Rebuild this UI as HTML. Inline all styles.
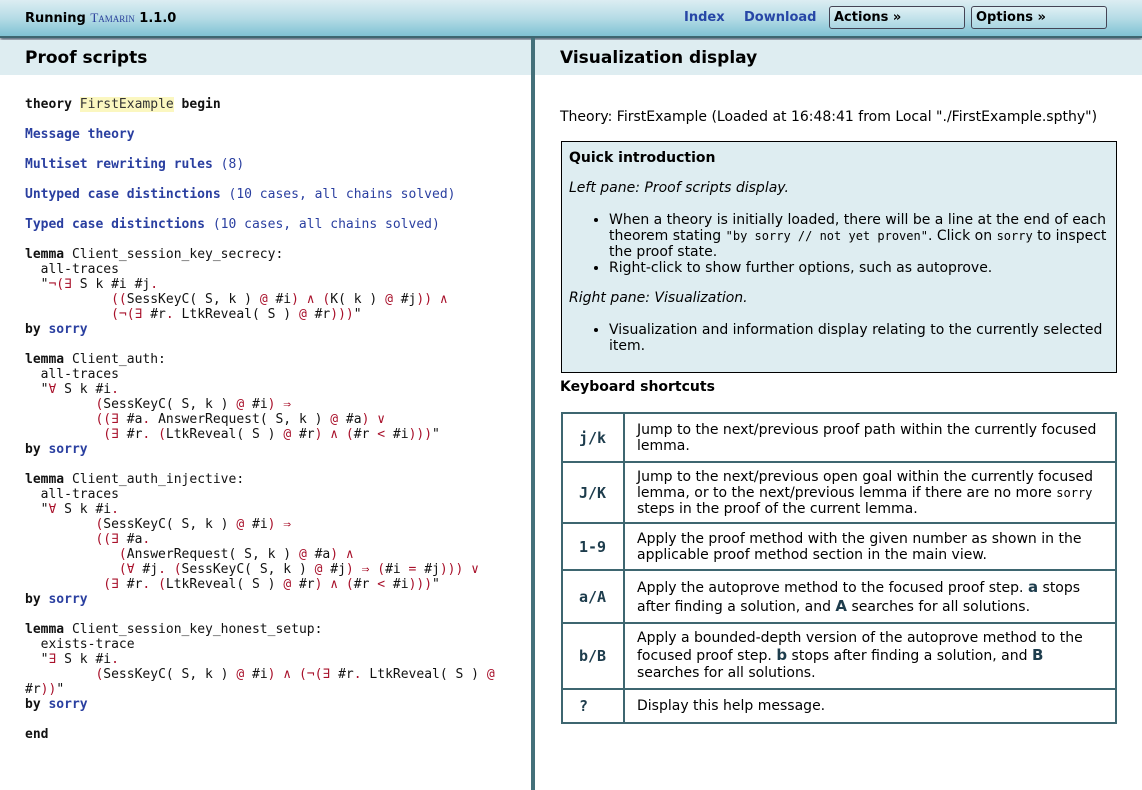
<!DOCTYPE html>
<html><head><meta charset="utf-8">
<style>
*{margin:0;padding:0;box-sizing:border-box}
body{width:1142px;height:790px;overflow:hidden;background:#fff;font-family:"DejaVu Sans","Liberation Sans",sans-serif;color:#000;position:relative}
#top{position:absolute;left:0;top:0;width:1142px;height:38px;background:linear-gradient(#dcedf2,#b6dce6 50%,#7fc2d3);border-bottom:2px solid #3e6670;box-shadow:0 2px 3px #567}
#top .t{position:absolute;left:25px;top:10px;font-size:13px;font-weight:bold}
#top .tam{font-family:"Liberation Serif",serif;font-variant:small-caps;color:#2a3f9a;font-weight:normal;font-size:13px}
#top a{position:absolute;top:10px;font-size:13px;font-weight:bold;color:#2746a6;text-decoration:none}
.btn{position:absolute;top:6px;height:23px;width:136px;border:1px solid #445;border-radius:3px;background:linear-gradient(#dff0f4,#a9d6e2);font-size:13px;font-weight:bold;padding:3px 4px}
.hd{position:absolute;top:40px;height:35px;background:#deedf1;font-size:17px;font-weight:bold;padding:8px 0 0 25px}
#div{position:absolute;left:531px;top:38px;width:4px;height:752px;background:#44707a}
pre{position:absolute;left:25px;top:97px;font-family:"DejaVu Sans Mono","Liberation Mono",monospace;font-size:13px;line-height:15px;color:#111}
pre b{font-weight:bold}
.l{color:#2a3fa0;font-weight:bold}
.n{color:#2a3fa0}
.r{color:#a8102a}
.hl{background:#fbf7c0;color:#333}
.th{position:absolute;left:560px;top:109px;font-size:14px;white-space:nowrap}
.box{position:absolute;left:561px;top:141px;width:556px;height:232px;background:#deedf1;border:1px solid #000;padding:8px 7px;font-size:14px;line-height:16px}
.box ul{margin:16px 0 14px 40px}
.box code,td code{font-family:"DejaVu Sans Mono",monospace;font-size:12px}
.ks{position:absolute;left:560px;top:379px;font-size:14px;font-weight:bold}
table{position:absolute;left:561px;top:412px;width:556px;border-collapse:collapse;border:2px solid #3e6670;font-size:14px;line-height:16px}
td{border:2px solid #3e6670;padding:0 10px 0 12px;vertical-align:middle}
td.k{width:62px;font-family:"DejaVu Sans Mono",monospace;font-weight:bold;font-size:15px;color:#1d3c4c;padding-left:16px}
td b{color:#1d3c4c;font-size:15px}
</style></head><body>
<div id="top">
<div class="t">Running <span class="tam">Tamarin</span> 1.1.0</div>
<a style="left:684px">Index</a><a style="left:744px">Download</a>
<div class="btn" style="left:829px">Actions »</div>
<div class="btn" style="left:971px">Options »</div>
</div>
<div class="hd" style="left:0;width:531px">Proof scripts</div>
<div class="hd" style="left:535px;width:607px">Visualization display</div>
<div id="div"></div>
<pre><b>theory</b> <span class="hl">FirstExample</span> <b>begin</b>

<span class="l">Message theory</span>

<span class="l">Multiset rewriting rules</span> <span class="n">(8)</span>

<span class="l">Untyped case distinctions</span> <span class="n">(10 cases, all chains solved)</span>

<span class="l">Typed case distinctions</span> <span class="n">(10 cases, all chains solved)</span>

<b>lemma</b> Client_session_key_secrecy:
  all-traces
  "<span class="r">¬(∃</span> S k #i #j<span class="r">.</span>
           <span class="r">((</span>SessKeyC( S, k ) <span class="r">@</span> #i<span class="r">) ∧ (</span>K( k ) <span class="r">@</span> #j<span class="r">)) ∧</span>
           <span class="r">(¬(∃</span> #r<span class="r">.</span> LtkReveal( S ) <span class="r">@</span> #r<span class="r">)))</span>"
<b>by</b> <span class="l">sorry</span>

<b>lemma</b> Client_auth:
  all-traces
  "<span class="r">∀</span> S k #i<span class="r">.</span>
         <span class="r">(</span>SessKeyC( S, k ) <span class="r">@</span> #i<span class="r">) ⇒</span>
         <span class="r">((∃</span> #a<span class="r">.</span> AnswerRequest( S, k ) <span class="r">@</span> #a<span class="r">) ∨</span>
          <span class="r">(∃</span> #r<span class="r">. (</span>LtkReveal( S ) <span class="r">@</span> #r<span class="r">) ∧ (</span>#r <span class="r">&lt;</span> #i<span class="r">)))</span>"
<b>by</b> <span class="l">sorry</span>

<b>lemma</b> Client_auth_injective:
  all-traces
  "<span class="r">∀</span> S k #i<span class="r">.</span>
         <span class="r">(</span>SessKeyC( S, k ) <span class="r">@</span> #i<span class="r">) ⇒</span>
         <span class="r">((∃</span> #a<span class="r">.</span>
            <span class="r">(</span>AnswerRequest( S, k ) <span class="r">@</span> #a<span class="r">) ∧</span>
            <span class="r">(∀</span> #j<span class="r">. (</span>SessKeyC( S, k ) <span class="r">@</span> #j<span class="r">) ⇒ (</span>#i <span class="r">=</span> #j<span class="r">))) ∨</span>
          <span class="r">(∃</span> #r<span class="r">. (</span>LtkReveal( S ) <span class="r">@</span> #r<span class="r">) ∧ (</span>#r <span class="r">&lt;</span> #i<span class="r">)))</span>"
<b>by</b> <span class="l">sorry</span>

<b>lemma</b> Client_session_key_honest_setup:
  exists-trace
  "<span class="r">∃</span> S k #i<span class="r">.</span>
         <span class="r">(</span>SessKeyC( S, k ) <span class="r">@</span> #i<span class="r">) ∧ (¬(∃</span> #r<span class="r">.</span> LtkReveal( S ) <span class="r">@</span>
#r<span class="r">))</span>"
<b>by</b> <span class="l">sorry</span>

<b>end</b></pre>
<div class="th">Theory: FirstExample (Loaded at 16:48:41 from Local "./FirstExample.spthy")</div>
<div class="box">
<b style="font-size:14px">Quick introduction</b>
<p style="margin-top:14px"><i>Left pane: Proof scripts display.</i></p>
<ul>
<li>When a theory is initially loaded, there will be a line at the end of each theorem stating <code>"by sorry // not yet proven"</code>. Click on <code>sorry</code> to inspect the proof state.</li>
<li>Right-click to show further options, such as autoprove.</li>
</ul>
<p><i>Right pane: Visualization.</i></p>
<ul>
<li>Visualization and information display relating to the currently selected item.</li>
</ul>
</div>
<div class="ks">Keyboard shortcuts</div>
<table>
<tr style="height:49px"><td class="k">j/k</td><td>Jump to the next/previous proof path within the currently focused lemma.</td></tr>
<tr style="height:61px"><td class="k">J/K</td><td>Jump to the next/previous open goal within the currently focused lemma, or to the next/previous lemma if there are no more <code>sorry</code> steps in the proof of the current lemma.</td></tr>
<tr style="height:47px"><td class="k">1-9</td><td>Apply the proof method with the given number as shown in the applicable proof method section in the main view.</td></tr>
<tr style="height:53px"><td class="k">a/A</td><td style="line-height:18px">Apply the autoprove method to the focused proof step. <b>a</b> stops after finding a solution, and <b>A</b> searches for all solutions.</td></tr>
<tr style="height:66px"><td class="k">b/B</td><td style="line-height:17px">Apply a bounded-depth version of the autoprove method to the focused proof step. <b>b</b> stops after finding a solution, and <b>B</b> searches for all solutions.</td></tr>
<tr style="height:34px"><td class="k">?</td><td>Display this help message.</td></tr>
</table>
</body></html>
